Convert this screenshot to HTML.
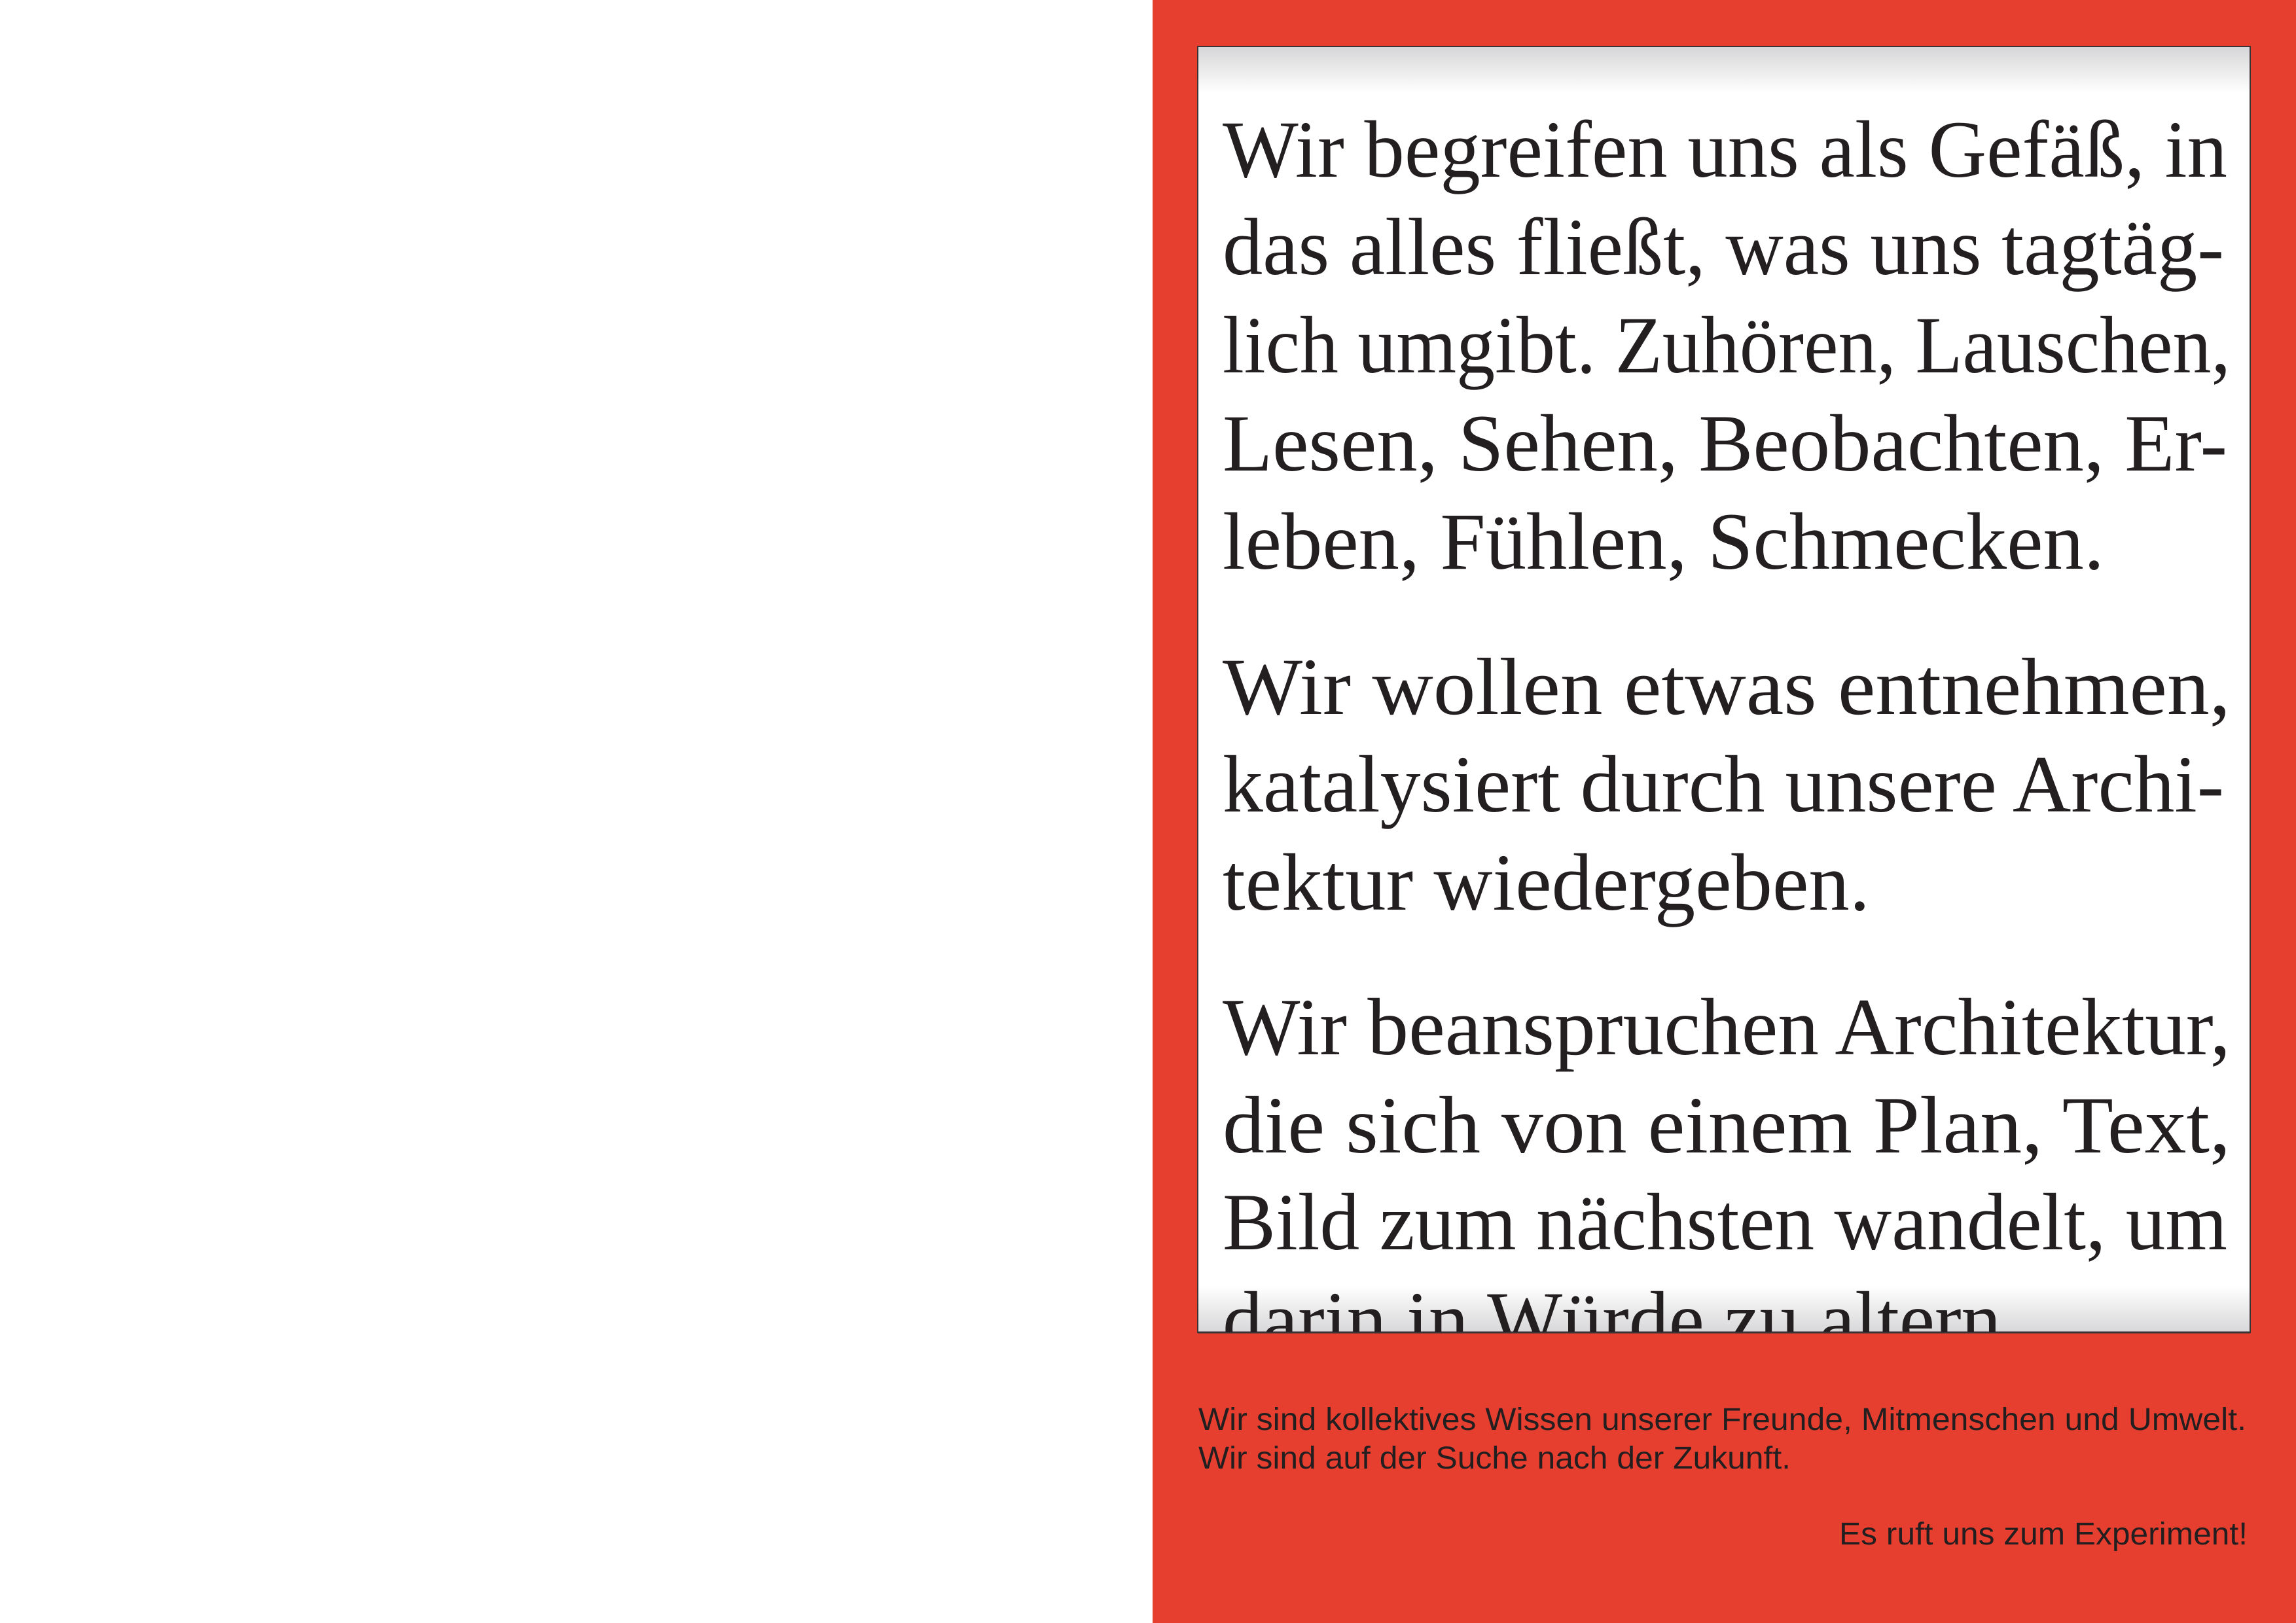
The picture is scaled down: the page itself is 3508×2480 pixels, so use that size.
<!DOCTYPE html>
<html><head><meta charset="utf-8">
<style>
html,body{margin:0;padding:0;background:#fff;}
body{width:3508px;height:2480px;overflow:hidden;position:relative;}
svg{position:absolute;left:0;top:0;}
</style></head>
<body>
<svg width="3508" height="2480" viewBox="0 0 3508 2480" xmlns="http://www.w3.org/2000/svg">
<defs>
<linearGradient id="gt" x1="0" y1="0" x2="0" y2="1">
<stop offset="0" stop-color="#d6d6d8"/><stop offset="1" stop-color="#ffffff"/>
</linearGradient>
<linearGradient id="gb" x1="0" y1="0" x2="0" y2="1">
<stop offset="0" stop-color="#ffffff"/><stop offset="1" stop-color="#d8d8da"/>
</linearGradient>
<clipPath id="box"><rect x="1831" y="72" width="1606" height="1963"/></clipPath>
</defs>
<rect x="1761" y="0" width="1747" height="2480" fill="#e63f2f"/>
<rect x="1830" y="71" width="1608" height="1965" fill="#ffffff" stroke="#3a3335" stroke-width="2"/>
<rect x="1831" y="72" width="1606" height="70" fill="url(#gt)"/>
<rect x="1831" y="1965" width="1606" height="70" fill="url(#gb)"/>
<line x1="1830" y1="2036" x2="3438" y2="2036" stroke="#3a3335" stroke-width="3"/>
<g clip-path="url(#box)" font-family="'Liberation Serif', serif" font-size="124" fill="#231f20">
<text x="1868" y="270" textLength="1535" lengthAdjust="spacingAndGlyphs">Wir begreifen uns als Gefäß, in</text>
<text x="1868" y="419" textLength="1530" lengthAdjust="spacingAndGlyphs">das alles fließt, was uns tagtäg-</text>
<text x="1868" y="569" textLength="1540" lengthAdjust="spacingAndGlyphs">lich umgibt. Zuhören, Lauschen,</text>
<text x="1868" y="719" textLength="1535" lengthAdjust="spacingAndGlyphs">Lesen, Sehen, Beobachten, Er-</text>
<text x="1868" y="869" textLength="1347" lengthAdjust="spacingAndGlyphs">leben, Fühlen, Schmecken.</text>
<text x="1868" y="1091" textLength="1540" lengthAdjust="spacingAndGlyphs">Wir wollen etwas entnehmen,</text>
<text x="1868" y="1240" textLength="1530" lengthAdjust="spacingAndGlyphs">katalysiert durch unsere Archi-</text>
<text x="1868" y="1390" textLength="989" lengthAdjust="spacingAndGlyphs">tektur wiedergeben.</text>
<text x="1868" y="1611" textLength="1540" lengthAdjust="spacingAndGlyphs">Wir beanspruchen Architektur,</text>
<text x="1868" y="1761" textLength="1540" lengthAdjust="spacingAndGlyphs">die sich von einem Plan, Text,</text>
<text x="1868" y="1909" textLength="1535" lengthAdjust="spacingAndGlyphs">Bild zum nächsten wandelt, um</text>
<text x="1868" y="2059" textLength="1220" lengthAdjust="spacingAndGlyphs">darin in Würde zu altern.</text>
</g>
<g font-family="'Liberation Sans', sans-serif" font-size="48" fill="#231f20">
<text x="1831" y="2185" textLength="1601" lengthAdjust="spacingAndGlyphs">Wir sind kollektives Wissen unserer Freunde, Mitmenschen und Umwelt.</text>
<text x="1831" y="2244" textLength="905" lengthAdjust="spacingAndGlyphs">Wir sind auf der Suche nach der Zukunft.</text>
<text x="2810" y="2360" textLength="624" lengthAdjust="spacingAndGlyphs">Es ruft uns zum Experiment!</text>
</g>
</svg>
</body></html>
